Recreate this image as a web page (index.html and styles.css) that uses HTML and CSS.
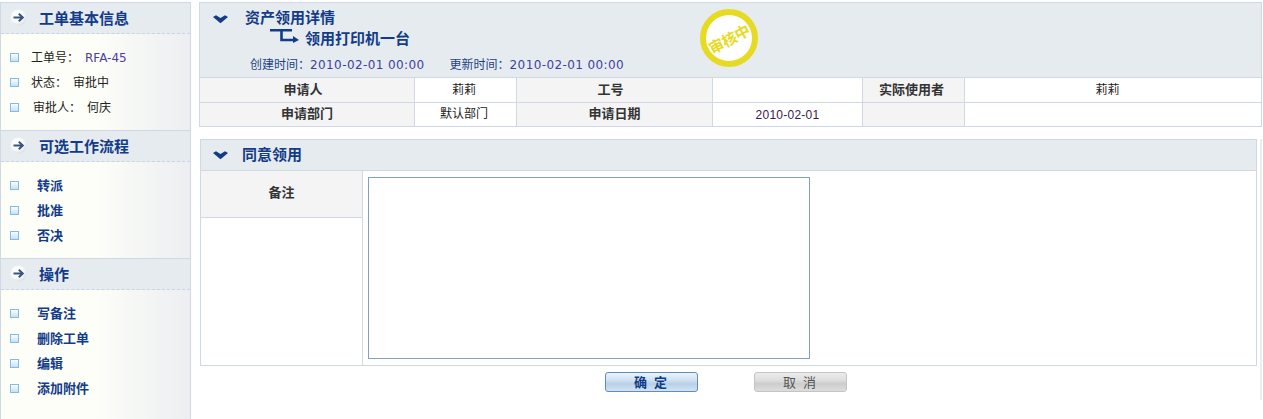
FILE: index.html
```html
<!DOCTYPE html>
<html lang="zh-CN">
<head>
<meta charset="utf-8">
<title>资产领用详情</title>
<link rel="stylesheet" href="styles.css">
</head>
<body>
<svg class="defs" width="0" height="0" aria-hidden="true">
  <defs>
    <radialGradient id="disc" cx="0.4" cy="0.35" r="0.7">
      <stop offset="0" stop-color="#ffffff"/>
      <stop offset="0.65" stop-color="#f6f7f8"/>
      <stop offset="1" stop-color="#d5dbe2"/>
    </radialGradient>
    <linearGradient id="sq" x1="0" y1="0" x2="0" y2="1">
      <stop offset="0" stop-color="#ffffff"/>
      <stop offset="1" stop-color="#bfe0f6"/>
    </linearGradient>
    <symbol id="go" viewBox="0 0 17 17">
      <circle cx="8.5" cy="8.5" r="8" fill="url(#disc)"/>
      <path d="M3.5 8.5H12M8.8 4.8L12.8 8.5L8.8 12.2" fill="none" stroke="#39577c" stroke-width="2"/>
    </symbol>
    <symbol id="sqr" viewBox="0 0 9 9">
      <rect x="0.5" y="0.5" width="8" height="8" fill="url(#sq)" stroke="#85bce6"/>
    </symbol>
    <symbol id="chev" viewBox="0 0 15 9">
      <path d="M0 2L3 0.2L7.5 3L12 0.2L15 2L7.5 8.2Z" fill="#123c88"/>
    </symbol>
  </defs>
</svg>
<div class="page">
  <aside class="side">
    <section class="box">
      <h2 class="box-head"><svg class="go"><use href="#go"/></svg><span class="head-text">工单基本信息</span></h2>
      <ul class="list list-info">
        <li><svg class="sq"><use href="#sqr"/></svg><span class="lab">工单号：</span><span class="code">RFA-45</span></li>
        <li><svg class="sq"><use href="#sqr"/></svg><span class="lab">状态：</span><span class="val">审批中</span></li>
        <li><svg class="sq"><use href="#sqr"/></svg><span class="lab lab-pad">审批人：</span><span class="val">何庆</span></li>
      </ul>
    </section>
    <section class="box">
      <h2 class="box-head"><svg class="go"><use href="#go"/></svg><span class="head-text">可选工作流程</span></h2>
      <ul class="list list-act">
        <li><svg class="sq"><use href="#sqr"/></svg><a>转派</a></li>
        <li><svg class="sq"><use href="#sqr"/></svg><a>批准</a></li>
        <li><svg class="sq"><use href="#sqr"/></svg><a>否决</a></li>
      </ul>
    </section>
    <section class="box box-last">
      <h2 class="box-head"><svg class="go"><use href="#go"/></svg><span class="head-text">操作</span></h2>
      <ul class="list list-act">
        <li><svg class="sq"><use href="#sqr"/></svg><a>写备注</a></li>
        <li><svg class="sq"><use href="#sqr"/></svg><a>删除工单</a></li>
        <li><svg class="sq"><use href="#sqr"/></svg><a>编辑</a></li>
        <li><svg class="sq"><use href="#sqr"/></svg><a>添加附件</a></li>
      </ul>
    </section>
  </aside>
  <main class="main">
    <section class="detail">
      <header class="detail-head">
        <svg class="chev chev-top"><use href="#chev"/></svg>
        <div class="detail-text">
          <h1 class="detail-title">资产领用详情</h1>
          <div class="detail-sub">
            <svg class="turn" viewBox="0 0 29 14"><path d="M0 1.2H22M11.5 1.2V11H25" fill="none" stroke="#123c88" stroke-width="2.6"/><path d="M23 7L29 11L23 14Z" fill="#123c88"/></svg>
            <span>领用打印机一台</span>
          </div>
          <div class="times">
            <span>创建时间：<b>2010-02-01 00:00</b></span>
            <span>更新时间：<b>2010-02-01 00:00</b></span>
          </div>
        </div>
        <div class="stamp"><span>审核中</span></div>
      </header>
      <table class="info">
        <colgroup><col class="c1"><col class="c2"><col class="c3"><col class="c4"><col class="c5"><col></colgroup>
        <tr><th class="off-l">申请人</th><td class="off-s">莉莉</td><th class="off-l">工号</th><td></td><th class="off-m">实际使用者</th><td class="off-xl">莉莉</td></tr>
        <tr><th>申请部门</th><td class="off-s">默认部门</td><th>申请日期</th><td class="date">2010-02-01</td><th></th><td></td></tr>
      </table>
    </section>
    <div class="form-wrap">
      <section class="form">
        <h2 class="form-head"><svg class="chev"><use href="#chev"/></svg>同意领用</h2>
        <div class="form-body">
          <div class="form-left"><div class="form-label">备注</div></div>
          <div class="form-right"><textarea class="note" aria-label="备注"></textarea></div>
        </div>
      </section>
      <div class="buttons">
        <button class="btn btn-ok" type="button">确 定</button>
        <button class="btn btn-no" type="button">取 消</button>
      </div>
    </div>
  </main>
</div>
</body>
</html>
```
FILE: styles.css
```css
* { box-sizing: border-box; }
html, body { margin: 0; padding: 0; height: 419px; overflow: hidden; background: #fff; }
body { font-family: "Noto Sans CJK SC", "Liberation Sans", sans-serif; font-size: 12px; color: #222; }
.defs { display: block; height: 0; }
.page { display: flex; height: 419px; padding-top: 2px; }

.side { width: 191px; flex: none; display: flex; flex-direction: column; border-left: 1px solid #cfd8e3; border-right: 1px solid #cfd8e3; }
.box { border-top: 1px solid #cfd8e3; }
.box-last { flex: 1; background: linear-gradient(90deg, #fdfef8 0, #fdfef8 50%, #eceef1 100%); }
.box-head { margin: 0; height: 31px; background: #e6ebf0; border-bottom: 1px dashed #c9d5e3; color: #133c88; font-size: 15px; font-weight: 700; line-height: 20px; display: flex; align-items: center; white-space: nowrap; padding: 0 0 2px 9px; }
.go { width: 17px; height: 17px; margin-right: 12px; flex: none; }
.head-text { padding-top: 2px; }
.list { list-style: none; margin: 0; padding: 11px 0 10px 9px; background: linear-gradient(90deg, #fdfef8 0, #fdfef8 50%, #eceef1 100%); }
.box-last .list { background: none; }
.list li { height: 25px; display: flex; align-items: center; }
.sq { width: 9px; height: 9px; flex: none; }
.list-info li { font-size: 12px; color: #222; }
.lab { margin-left: 12px; margin-right: 6px; padding-bottom: 2px; }
.lab-pad { margin-left: 14px; margin-right: 6px; }
.val { padding-bottom: 2px; }
.code { font-family: "DejaVu Sans", sans-serif; color: #4a3f9f; }
.list-act a { margin-left: 18px; padding-bottom: 2px; font-size: 13px; font-weight: 700; color: #133c88; }

.main { flex: 1; min-width: 0; margin-left: 8px; margin-right: 1px; }
.detail { border-top: 1px solid #cfd8e3; }
.detail-head { position: relative; height: 75px; background: #e6ebf0; border-left: 1px solid #cfd8e3; border-right: 1px solid #cfd8e3; border-bottom: 1px solid #cfd8e3; display: flex; padding-left: 13px; }
.chev { width: 15px; height: 9px; flex: none; }
.chev-top { margin-top: 12px; }
.detail-text { margin-left: 17px; }
.detail-title { margin: 4px 0 0; font-size: 15px; font-weight: 700; line-height: 20px; color: #133c88; }
.detail-sub { display: flex; align-items: center; height: 20px; margin-left: 25px; font-size: 15px; font-weight: 700; color: #133c88; }
.turn { width: 29px; height: 14px; margin: -3px 6px 0 0; }
.times { display: flex; gap: 25px; margin: 9px 0 0 5px; font-size: 12px; line-height: 16px; color: #1d4386; }
.times b { font-family: "DejaVu Sans", sans-serif; font-weight: 400; letter-spacing: 0.4px; color: #3d3f9f; }
.stamp { position: absolute; left: 500px; top: 6px; width: 58px; height: 58px; border-radius: 50%; border: 6px solid #e6da22; background: #fff; display: flex; align-items: center; justify-content: center; }
.stamp span { transform: rotate(-28deg); color: #e6da22; font-size: 15px; font-weight: 700; white-space: nowrap; letter-spacing: -0.5px; }

.info { width: 100%; table-layout: fixed; border-collapse: collapse; }
.c1 { width: 215px; }
.c2 { width: 102px; }
.c3 { width: 196px; }
.c4 { width: 150px; }
.c5 { width: 102px; }
.info th, .info td { height: 24px; padding: 0 0 2px; border: 1px solid #cfd8e3; text-align: center; font-size: 12px; line-height: 16px; }
.info tr:first-child th, .info tr:first-child td { border-top: 0; }
.info th { background: #f4f4f5; color: #333; font-size: 13px; font-weight: 700; }
.info td { background: #fff; color: #222; }
.info .off-s { padding-right: 3px; }
.info .off-m { padding-right: 4px; }
.info .off-l { padding-right: 8px; }
.info .off-xl { padding-right: 11px; }
.info td.date { font-family: "Liberation Sans", sans-serif; letter-spacing: 0.25px; padding: 2px 0 0; color: #3a1a4a; }

.form-wrap { margin-top: 12px; border-right: 2px solid #eeeeee; height: 261px; padding-right: 3px; }
.form { margin-left: 1px; border: 1px solid #cfd8e3; height: 227px; display: flex; flex-direction: column; }
.form-head { margin: 0; height: 31px; background: #e6ebf0; border-bottom: 1px solid #cfd8e3; display: flex; align-items: center; padding: 0 0 2px 12px; color: #133c88; font-size: 15px; font-weight: 700; line-height: 20px; flex: none; }
.form-head .chev { margin-right: 14px; margin-top: 3px; }
.form-body { flex: 1; display: flex; min-height: 0; }
.form-left { width: 162px; flex: none; border-right: 1px solid #cfd8e3; }
.form-label { height: 47px; background: #f4f4f5; border-bottom: 1px solid #cfd8e3; text-align: center; padding-top: 12px; font-size: 13px; font-weight: 700; color: #333; line-height: 18px; }
.form-right { flex: 1; padding: 6px 5px; }
.note { display: block; width: 442px; height: 182px; border: 1px solid #85a0bc; background: #fff; padding: 0; margin: 0; resize: none; outline: 0; }
.buttons { display: flex; gap: 56px; padding: 6px 0 0 406px; }
.btn { width: 93px; height: 20px; border-radius: 3px; padding: 0; font-family: inherit; font-size: 13px; line-height: 18px; cursor: pointer; }
.btn-ok { border: 1px solid #5f8cb8; color: #133c88; font-weight: 700; letter-spacing: 2px; background: linear-gradient(180deg, #eaf3fb 0, #cfe1f2 40%, #b8d0e8 60%, #d3e3f2 100%); }
.btn-no { border: 1px solid #c4c4c4; color: #555; letter-spacing: 2px; background: linear-gradient(180deg, #ececec 0, #dedede 40%, #cdcdcd 60%, #dddddd 100%); }
```
